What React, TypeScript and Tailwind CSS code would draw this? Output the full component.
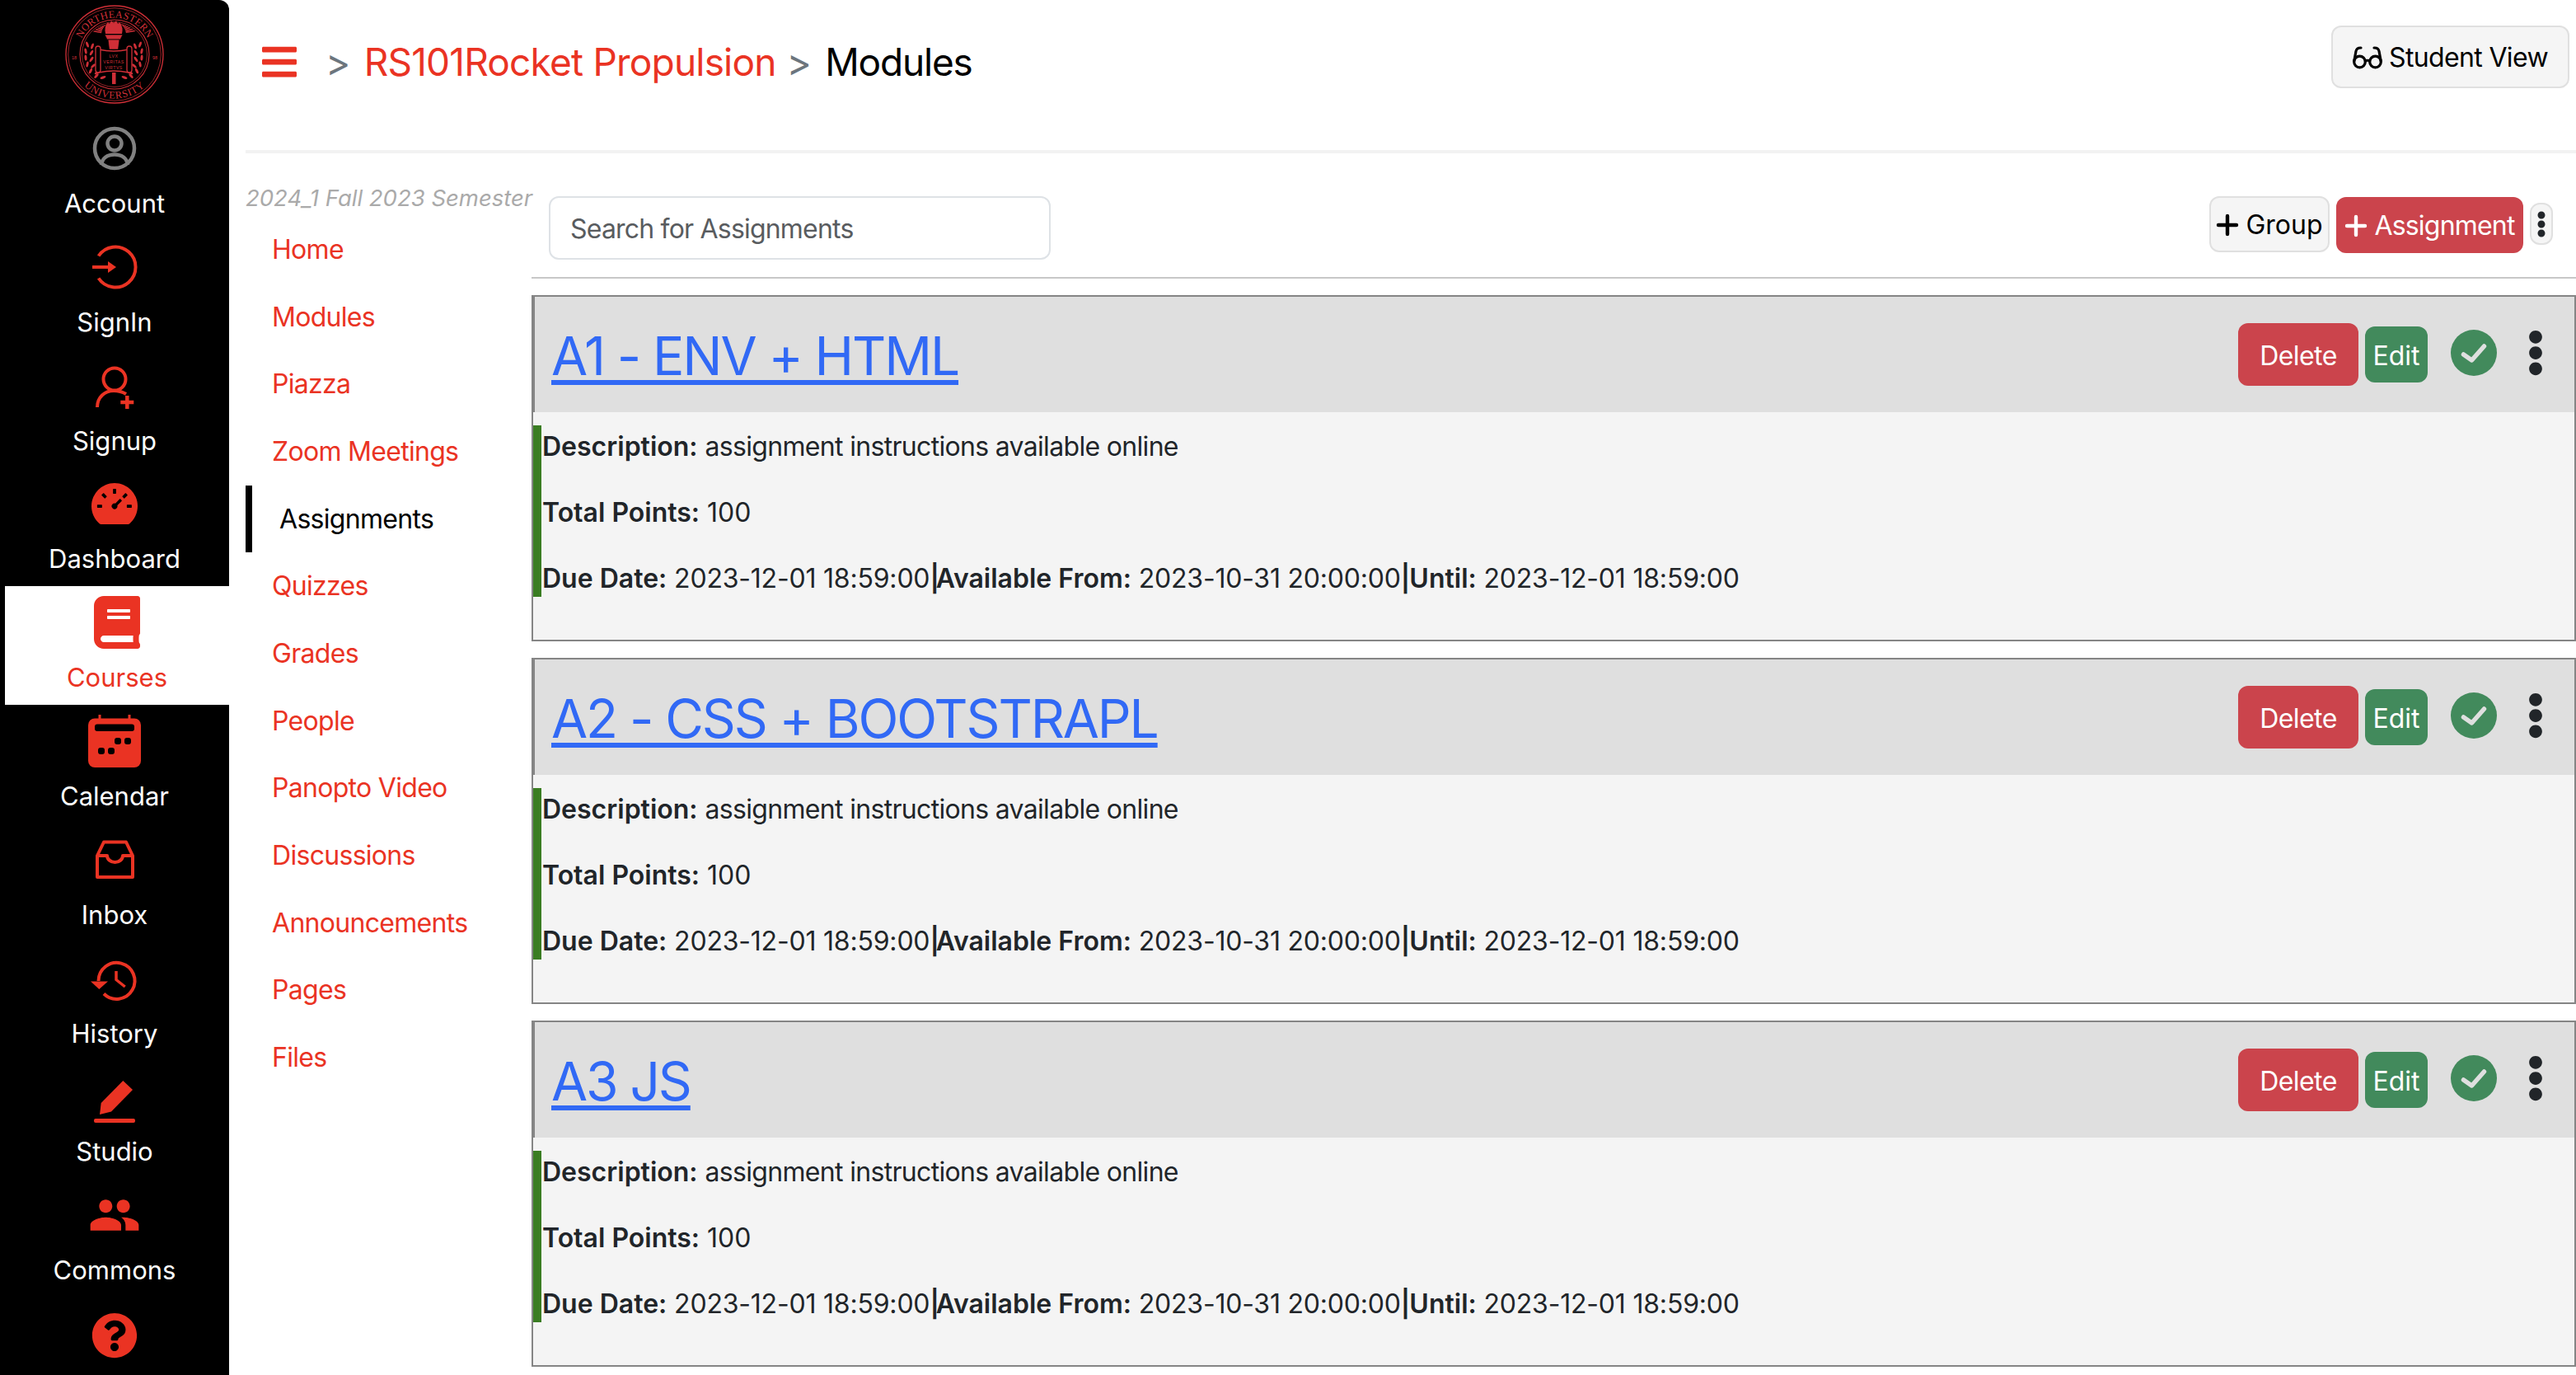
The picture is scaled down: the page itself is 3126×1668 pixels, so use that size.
import { AiFillDashboard } from "react-icons/ai";
import { FaBars, FaBook, FaEllipsisV, FaQuestionCircle } from "react-icons/fa";
import { MdPeople } from "react-icons/md";
import type { ReactNode } from "react";

const fontClass = "font-['Inter','Liberation_Sans',sans-serif]";
const sealRed = "#cf2f37";

// the side nav icons that no package had in this exact shape, all in a 64 box
const AccountIcon = () => (
  <svg viewBox="0 0 64 64" className="h-[64px] w-[64px]" fill="none" stroke="#808080" strokeWidth="4.5">
    <circle cx="32" cy="32" r="24" />
    <circle cx="32" cy="26" r="8.5" />
    <path d="M16 52 C17 44 23 39.5 32 39.5 C41 39.5 47 44 48 52" />
  </svg>
);

const SignInIcon = () => (
  <svg viewBox="0 0 64 64" className="h-[64px] w-[64px]" fill="none" stroke="currentColor" strokeWidth="4">
    <path d="M12.6 18.5 A24.5 24.5 0 1 1 12.6 45.5" />
    <path d="M5 32 H26" />
    <path d="M24 25 L34 32 L24 39 Z" fill="currentColor" stroke="none" />
  </svg>
);

const SignUpIcon = () => (
  <svg viewBox="0 0 64 64" className="h-[64px] w-[64px]" fill="none" stroke="currentColor" strokeWidth="4">
    <circle cx="32" cy="24" r="13.5" />
    <path d="M11 58 C11 46 20 38 31 38 C36 38 41 39 46 42" />
    <path d="M47.3 44 V60 M39.3 52 H55.3" strokeWidth="4.5" />
  </svg>
);

const CalendarIcon = () => (
  <svg viewBox="0 0 64 64" className="h-[64px] w-[64px]">
    <path d="M12.5 0 h3 v6 h-3 Z M48.5 0 h3 v6 h-3 Z" fill="currentColor" />
    <rect x="0" y="4.5" width="64" height="59.5" rx="8" fill="currentColor" />
    <rect x="8" y="11.5" width="48" height="8.5" rx="3" fill="#000" />
    <rect x="32" y="28" width="8" height="8" rx="3" fill="#000" />
    <rect x="44" y="28" width="8" height="8" rx="3" fill="#000" />
    <rect x="12" y="40" width="8" height="8" rx="3" fill="#000" />
    <rect x="24" y="40" width="8" height="8" rx="3" fill="#000" />
  </svg>
);

const InboxIcon = () => (
  <svg
    viewBox="0 0 64 64"
    className="h-[64px] w-[64px]"
    fill="none"
    stroke="currentColor"
    strokeWidth="4"
    strokeLinejoin="round"
  >
    <path d="M11 27 L19 10.5 H46 L54 27 V53 H11 Z" />
    <path d="M11 27 H23 A9.5 8 0 0 0 42 27 H54" />
  </svg>
);

const HistoryIcon = () => (
  <svg viewBox="0 0 64 64" className="h-[64px] w-[64px]" fill="none" stroke="currentColor" strokeWidth="4">
    <path d="M12.5 35 A22 22 0 1 1 19 50.5" />
    <path d="M3 35.4 H24 L13.3 45 Z" fill="currentColor" stroke="none" />
    <path d="M34 23 V33.5 L44.7 42" strokeWidth="3.5" />
  </svg>
);

const StudioIcon = () => (
  <svg viewBox="0 0 64 64" className="h-[64px] w-[64px]" fill="currentColor">
    <path d="M14 54 L15.7 40 L42.3 13 L54 24 L28 50.6 Z" />
    <rect x="7" y="59" width="50" height="5" rx="2" />
  </svg>
);

const GlassesIcon = () => (
  <svg
    viewBox="0 0 36 28"
    className="h-[28px] w-[36px]"
    fill="none"
    stroke="currentColor"
    strokeWidth="3.2"
    strokeLinecap="round"
  >
    <circle cx="8.5" cy="19" r="6.8" />
    <circle cx="27.5" cy="19" r="6.8" />
    <path d="M15.3 18 Q18 16.5 20.7 18" />
    <path d="M1.8 18 L4 6 Q5 1.8 10 2" />
    <path d="M34.2 18 L32 6 Q31 1.8 26 2" />
  </svg>
);

const PlusIcon = () => (
  <svg viewBox="0 0 28 28" className="h-[28px] w-[28px]" fill="none" stroke="currentColor" strokeWidth="4.4" strokeLinecap="round">
    <path d="M14 3 V25 M3 14 H25" />
  </svg>
);

const CheckIcon = () => (
  <svg viewBox="0 0 56 56" className="-mt-[4px] ml-[28px] h-[56px] w-[56px]">
    <circle cx="28" cy="28" r="28" fill="#428a5c" />
    <path d="M15.5 30 L25.5 37 L40.5 20" fill="none" stroke="#dfdfdf" strokeWidth="5.5" strokeLinecap="round" strokeLinejoin="round" />
  </svg>
);

const sideItems: { label: string; icon: ReactNode; active?: boolean; noLabel?: boolean }[] = [
  { label: "Account", icon: <AccountIcon /> },
  { label: "SignIn", icon: <SignInIcon /> },
  { label: "Signup", icon: <SignUpIcon /> },
  { label: "Dashboard", icon: <AiFillDashboard size={64} /> },
  { label: "Courses", icon: <FaBook size={64} />, active: true },
  { label: "Calendar", icon: <CalendarIcon /> },
  { label: "Inbox", icon: <InboxIcon /> },
  { label: "History", icon: <HistoryIcon /> },
  { label: "Studio", icon: <StudioIcon /> },
  { label: "Commons", icon: <MdPeople size={64} /> },
  { label: "Help", icon: <FaQuestionCircle size={56} />, noLabel: true },
];

const courseLinks = [
  "Home",
  "Modules",
  "Piazza",
  "Zoom Meetings",
  "Assignments",
  "Quizzes",
  "Grades",
  "People",
  "Panopto Video",
  "Discussions",
  "Announcements",
  "Pages",
  "Files",
];

const assignments = ["A1 - ENV + HTML", "A2 - CSS + BOOTSTRAPL", "A3 JS"];

const rayAngles = Array.from({ length: 25 }, (_, i) => 190 + i * 6.66);
const leaves = [
  [27, 48, 70],
  [33, 50, 110],
  [25, 56, 80],
  [32, 58, 120],
  [25, 64, 85],
  [32, 66, 125],
  [27, 72, 100],
  [34, 74, 135],
  [31, 80, 115],
  [39, 82, 150],
  [38, 86, 130],
  [46, 88, 160],
];

// seal drawn by hand, the lettering stays real svg text
const Seal = () => (
  <svg viewBox="0 0 120 120" className="h-[120px] w-[120px]" fill={sealRed} stroke="none">
    <defs>
      <path id="sealTop" d="M 15.5 60 A 44.5 44.5 0 0 1 104.5 60" />
      <path id="sealBottom" d="M 6.5 60 A 53.5 53.5 0 0 0 113.5 60" />
      <clipPath id="sealDisc">
        <circle cx="60" cy="60" r="38" />
      </clipPath>
    </defs>
    <circle cx="60" cy="60" r="59" fill="none" stroke={sealRed} strokeWidth="1.3" />
    <circle cx="60" cy="60" r="56.3" fill="none" stroke={sealRed} strokeWidth="0.7" />
    <circle cx="60" cy="60" r="42" fill="none" stroke={sealRed} strokeWidth="1.1" />
    <circle cx="60" cy="60" r="39.5" fill="none" stroke={sealRed} strokeWidth="0.7" />
    <text fontFamily="Liberation Serif" fontSize="12.5" letterSpacing="0.1">
      <textPath href="#sealTop" startOffset="50%" textAnchor="middle">NORTHEASTERN</textPath>
    </text>
    <text fontFamily="Liberation Serif" fontSize="12.5" letterSpacing="0.7">
      <textPath href="#sealBottom" startOffset="50%" textAnchor="middle">UNIVERSITY</textPath>
    </text>
    <text x="11" y="66" textAnchor="middle" fontFamily="Liberation Sans" fontSize="5.5">18</text>
    <text x="109" y="66" textAnchor="middle" fontFamily="Liberation Sans" fontSize="5.5">98</text>
    <g clipPath="url(#sealDisc)" stroke={sealRed} strokeWidth="1.5">
      {rayAngles.map((a) => (
        <line
          key={a}
          x1={59 + 15 * Math.cos((a * Math.PI) / 180)}
          y1={36 + 15 * Math.sin((a * Math.PI) / 180)}
          x2={59 + 60 * Math.cos((a * Math.PI) / 180)}
          y2={36 + 60 * Math.sin((a * Math.PI) / 180)}
        />
      ))}
    </g>
    <path d="M49 35 Q47 26 52 21 Q54 25 56 19 Q59 24 62 19 Q64 25 66 21 Q71 27 69 35 Z" />
    <path d="M48 36 H70 L67 42 H51 Z" stroke="#000" strokeWidth="0.7" />
    <path d="M52 42 H66 L64.5 54 H53.5 Z" stroke="#000" strokeWidth="0.7" />
    <rect x="57" y="82" width="4.5" height="14" />
    {leaves.map(([x, y, r]) => (
      <g key={`${x}-${y}`}>
        <ellipse cx={x} cy={y} rx="3.6" ry="1.5" transform={`rotate(${r} ${x} ${y})`} />
        <ellipse cx={118 - x} cy={y} rx="3.6" ry="1.5" transform={`rotate(${-r} ${118 - x} ${y})`} />
      </g>
    ))}
    <path d="M41 54 Q59 58 77 54 V82 Q59 78 41 82 Z" fill="#000" stroke={sealRed} strokeWidth="1.3" />
    <rect x="37" y="50" width="6" height="32" rx="3" fill="#000" stroke={sealRed} strokeWidth="1.3" />
    <rect x="75" y="50" width="6" height="32" rx="3" fill="#000" stroke={sealRed} strokeWidth="1.3" />
    <g fontFamily="Liberation Sans" fontSize="5.2" textAnchor="middle" letterSpacing="0.5">
      <text x="59" y="63.5">LVX</text>
      <text x="59" y="70.5">VERITAS</text>
      <text x="59" y="77.5">VIRTVS</text>
    </g>
  </svg>
);

const SideNav = () => (
  <nav className="flex w-[278px] shrink-0 flex-col overflow-hidden rounded-tr-[12px] bg-black">
    <div className="flex h-[136px] shrink-0 justify-center pt-[6px]">
      <Seal />
    </div>
    {sideItems.map((item) => (
      <div
        key={item.label}
        className={`flex h-[143.8px] shrink-0 flex-col items-center text-[#ea3323] ${
          item.noLabel ? "pt-[14px]" : "pt-[12px]"
        } ${item.active ? "ml-[6px] bg-white" : ""}`}
      >
        <div className="flex h-[64px] items-center justify-center">{item.icon}</div>
        {!item.noLabel && (
          <div className={`mt-[11px] text-[31px] leading-[48px] ${item.active ? "" : "text-white"}`}>
            {item.label}
          </div>
        )}
      </div>
    ))}
  </nav>
);

const CourseNav = () => (
  <div className="w-[347px] shrink-0 pt-[33px]">
    <div className="text-[27.5px] italic leading-[42px] whitespace-nowrap text-[#aaaaaa]">
      2024_1 Fall 2023 Semester
    </div>
    <ul className="mt-[1px] tracking-[-0.7px]">
      {courseLinks.map((link) =>
        link === "Assignments" ? (
          <li key={link} className="flex h-[81.7px] items-center border-l-[8px] border-black pl-[33px] text-black">
            {link}
          </li>
        ) : (
          <li key={link} className="flex h-[81.7px] items-center pl-[32px] text-[#ea3323]">
            {link}
          </li>
        ),
      )}
    </ul>
  </div>
);

const AssignmentCard = ({ title }: { title: string }) => (
  <div className="mb-[20px] h-[420px] border-2 border-[#858585] bg-[#f4f4f4]">
    <div className="flex h-[140px] items-center justify-between border-l-2 border-[#858585] bg-[#dfdfdf] pl-[20px] pr-[19px]">
      <a className="block pt-[4px] text-[64px] leading-[76px] tracking-[-2.1px] text-[#3169f5] underline decoration-[6px] underline-offset-[6px]">
        {title}
      </a>
      <div className="flex items-center">
        <button className="h-[76px] w-[146px] rounded-[12px] bg-[#cb444c] pt-[3px] tracking-[-0.6px] text-white">
          Delete
        </button>
        <button className="ml-[8px] h-[68px] w-[76px] rounded-[12px] bg-[#428a5c] pt-[3px] text-white">Edit</button>
        <CheckIcon />
        <FaEllipsisV size={56} className="-mt-[4px] ml-[19px] text-[#212529]" />
      </div>
    </div>
    <div className="pt-[16px]">
      <div className="border-l-[10px] border-[#3a7d22] pl-[1px] text-[#212529]">
        <p className="mb-[32px] h-[48px] leading-[52px]">
          <b className="font-semibold">Description:</b>{" "}
          <span className="tracking-[-0.68px]">assignment instructions available online</span>
        </p>
        <p className="mb-[32px] h-[48px] leading-[52px]">
          <b className="font-semibold">Total Points:</b> 100
        </p>
        <p className="mb-[32px] h-[48px] leading-[52px] tracking-[-0.2px]">
          <b className="font-semibold tracking-normal">Due Date:</b> 2023-12-01 18:59:00
          <b className="font-semibold tracking-[-4px]">|</b>
          <b className="font-semibold tracking-normal">Available From:</b> 2023-10-31 20:00:00
          <b className="font-semibold tracking-[-1px]">|</b>
          <b className="font-semibold tracking-normal">Until:</b> 2023-12-01 18:59:00
        </p>
      </div>
    </div>
  </div>
);

export default function App() {
  return (
    <div className={`flex h-[1668px] w-[3126px] overflow-hidden bg-white text-[32px] ${fontClass}`}>
      <SideNav />
      <main className="min-w-0 flex-1 pl-[20px]">
        <header className="flex h-[186px] items-start justify-between border-b-4 border-[#f2f2f2] pr-[8px]">
          <div className="flex items-center pl-[17px] pt-[50px] text-[46px] leading-[48px] tracking-[-0.8px]">
            <FaBars size={48} className="text-[#ea3323]" />
            <span className="ml-[32px] mt-[1px] text-[#6c757d]">&gt;</span>
            <span className="ml-[17px] mt-[1px] text-[#ea3323]">RS101Rocket Propulsion</span>
            <span className="ml-[13px] mt-[1px] text-[#6c757d]">&gt;</span>
            <span className="ml-[17px] mt-[1px] tracking-[-1.2px] text-black">Modules</span>
          </div>
          <button className="mt-[31px] flex h-[76px] w-[289px] items-center justify-center gap-[8px] rounded-[12px] border-2 border-[#e0e0e0] bg-[#f5f5f5] pt-[2px] tracking-[-0.65px] text-black">
            <GlassesIcon />
            Student View
          </button>
        </header>
        <div className="flex">
          <CourseNav />
          <section className="min-w-0 flex-1 pt-[52px]">
            <div className="mb-[20px] flex h-[100px] items-start justify-between border-b-2 border-[#c8c8c8] pl-[21px] pr-[28px]">
              <input
                placeholder="Search for Assignments"
                className="h-[77px] w-[609px] rounded-[12px] border-2 border-[#dee2e6] bg-white px-[24px] pt-[2px] text-[32px] tracking-[-0.8px] placeholder:text-[#595c5f]"
              />
              <div className="flex items-start">
                <button className="flex h-[68px] w-[146px] items-center justify-center gap-[8px] rounded-[12px] border-2 border-[#e0e0e0] bg-[#f5f5f5] pt-[2px] text-black">
                  <PlusIcon />
                  Group
                </button>
                <button className="ml-[8px] mt-[1px] flex h-[68px] w-[227px] items-center justify-center gap-[8px] rounded-[12px] bg-[#cb444c] pt-[2px] tracking-[-0.8px] text-white">
                  <PlusIcon />
                  Assignment
                </button>
                <button className="ml-[8px] mt-[8px] flex h-[51px] w-[28px] items-center justify-center rounded-[12px] border-2 border-[#e0e0e0] bg-[#f5f5f5] text-[#212529]">
                  <FaEllipsisV size={32} />
                </button>
              </div>
            </div>
            {assignments.map((title) => (
              <AssignmentCard key={title} title={title} />
            ))}
          </section>
        </div>
      </main>
    </div>
  );
}
